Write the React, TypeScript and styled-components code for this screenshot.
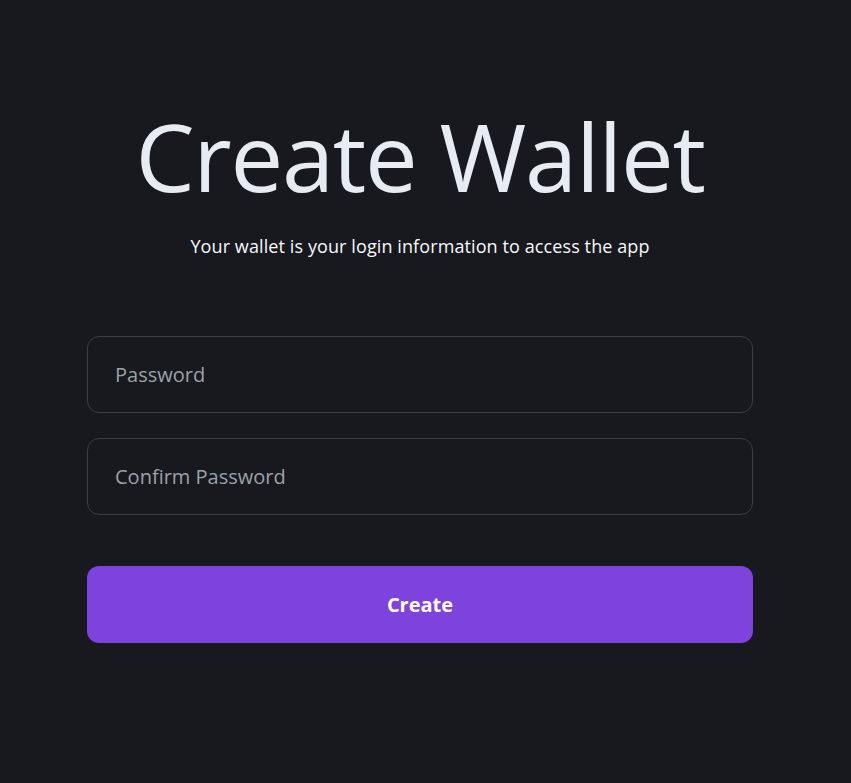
import styled, { createGlobalStyle } from 'styled-components'

const GlobalStyle = createGlobalStyle`
  html, body {
    margin: 0;
    padding: 0;
    background-color: #17191e;
  }
  body {
    font-family: 'Open Sans', 'Noto Sans', sans-serif;
  }
`

const Page = styled.div`
  box-sizing: border-box;
  min-height: 783px;
  padding: 99px 98px 0 87px;
  width: 100%;
`

const Header = styled.div`
  align-items: center;
  display: flex;
  flex-direction: column;
`

const Title = styled.h1`
  color: #e6ecf1;
  font-size: 94px;
  font-weight: 400;
  letter-spacing: -1.3px;
  line-height: 114px;
  margin: 0;
`

const Subtitle = styled.p`
  color: #f7f8fa;
  font-size: 18px;
  letter-spacing: 0.1px;
  line-height: 24px;
  margin: 21px 0 0;
`

const Form = styled.form`
  display: flex;
  flex-direction: column;
  gap: 25px;
  margin-top: 78px;
`

const Input = styled.input`
  background-color: #17191e;
  border: 1px solid #3b3e45;
  border-radius: 12px;
  box-sizing: border-box;
  color: #e6ecf1;
  font-family: inherit;
  font-size: 20px;
  height: 77px;
  outline: none;
  padding: 0 27px;
  width: 100%;

  &::placeholder {
    color: #9ba1aa;
  }
`

const SubmitButton = styled.button`
  background-color: #7e43dc;
  border: none;
  border-radius: 12px;
  color: #ffffff;
  cursor: pointer;
  font-family: inherit;
  font-size: 20px;
  font-weight: 700;
  height: 77px;
  margin-top: 26px;
  width: 100%;
`

const App: React.FC = () => {
  return (
    <>
      <GlobalStyle />
      <Page>
        <Header>
          <Title>Create Wallet</Title>
          <Subtitle>Your wallet is your login information to access the app</Subtitle>
        </Header>
        <Form onSubmit={(e) => e.preventDefault()}>
          <Input type="password" placeholder="Password" />
          <Input type="password" placeholder="Confirm Password" />
          <SubmitButton type="submit">Create</SubmitButton>
        </Form>
      </Page>
    </>
  )
}

export default App
